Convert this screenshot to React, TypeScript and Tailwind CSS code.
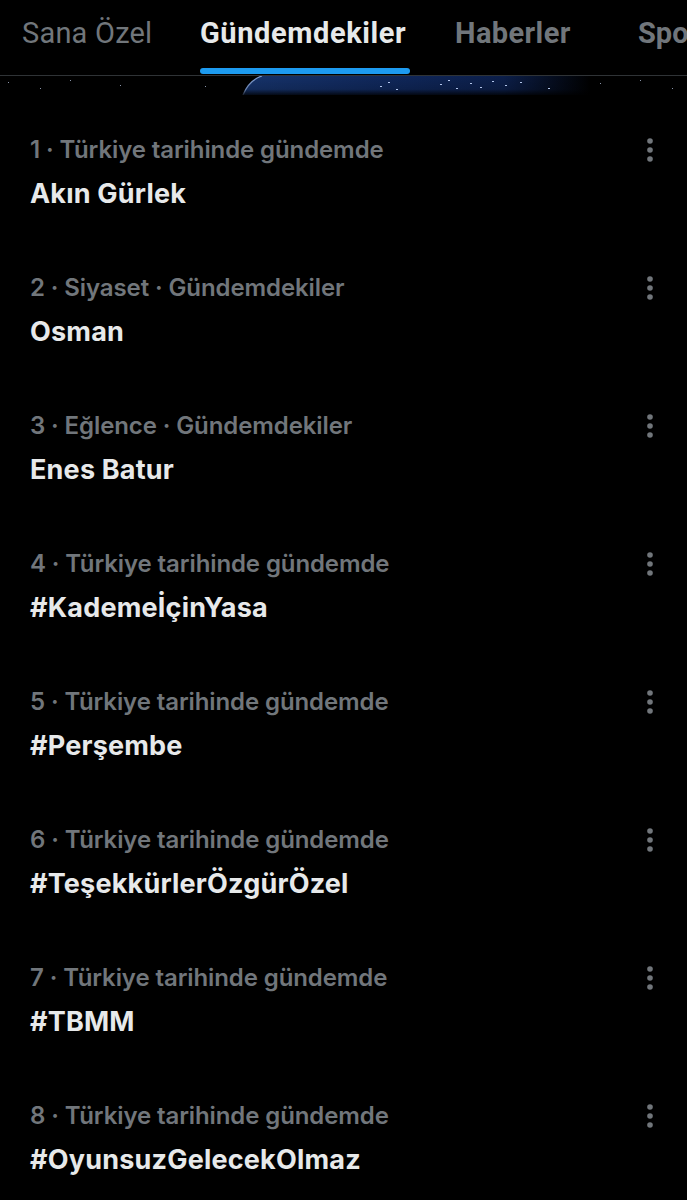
import React from "react";

const items = [
  { meta: "1 · Türkiye tarihinde gündemde", title: "Akın Gürlek" },
  { meta: "2 · Siyaset · Gündemdekiler", title: "Osman" },
  { meta: "3 · Eğlence · Gündemdekiler", title: "Enes Batur" },
  { meta: "4 · Türkiye tarihinde gündemde", title: "#KademeİçinYasa" },
  { meta: "5 · Türkiye tarihinde gündemde", title: "#Perşembe" },
  { meta: "6 · Türkiye tarihinde gündemde", title: "#TeşekkürlerÖzgürÖzel" },
  { meta: "7 · Türkiye tarihinde gündemde", title: "#TBMM" },
  { meta: "8 · Türkiye tarihinde gündemde", title: "#OyunsuzGelecekOlmaz" },
];

const stars: [number, number][] = [
  [8, 6], [40, 12], [70, 4], [120, 9], [205, 10], [600, 7], [640, 4], [672, 12],
];
const lights: [number, number][] = [
  [380, 10], [388, 6], [396, 13], [440, 8], [448, 4], [456, 12], [470, 7], [480, 11], [492, 5], [505, 9], [520, 6], [548, 12],
];

function Banner() {
  return (
    <svg width="687" height="19" viewBox="0 0 687 19" className="block">
      <defs>
        <linearGradient id="g" x1="0" x2="1" y1="0" y2="0">
          <stop offset="0" stopColor="#16336b" />
          <stop offset="0.4" stopColor="#10285c" />
          <stop offset="0.75" stopColor="#0c1f4a" />
          <stop offset="1" stopColor="#000" />
        </linearGradient>
        <linearGradient id="f" x1="0" x2="0" y1="0" y2="1">
          <stop offset="0" stopColor="#000" stopOpacity="0" />
          <stop offset="0.7" stopColor="#000" stopOpacity="0.15" />
          <stop offset="1" stopColor="#000" stopOpacity="0.8" />
        </linearGradient>
      </defs>
      <path d="M243 19 Q249 4 262 0 L590 0 L590 19 Z" fill="url(#g)" />
      <path d="M243 19 Q249 4 262 0" fill="none" stroke="#7f9cd0" strokeWidth="1.3" />
      <rect x="0" y="0" width="687" height="19" fill="url(#f)" />
      {stars.map(([x, y], i) => (
        <rect key={i} x={x} y={y} width="1" height="1" fill="#8a94a8" />
      ))}
      {lights.map(([x, y], i) => (
        <rect key={"l" + i} x={x} y={y} width="2" height="1" fill="#b3c6ec" />
      ))}
    </svg>
  );
}

function Dots() {
  return (
    <svg width="8" height="24" viewBox="0 0 8 24" className="block mt-[3px]">
      <circle cx="4" cy="3" r="2.8" fill="#71767b" />
      <circle cx="4" cy="12" r="2.8" fill="#71767b" />
      <circle cx="4" cy="21" r="2.8" fill="#71767b" />
    </svg>
  );
}

export default function App() {
  return (
    <div className="w-[687px] h-[1200px] bg-black overflow-hidden">
      <div
        className="h-[76px] border-b border-[#2f3336] flex items-start whitespace-nowrap overflow-hidden"
        style={{ fontFamily: "Roboto, 'Noto Sans', sans-serif" }}
      >
        <div className="w-[200px] shrink-0 pl-[22px] pt-[14px] text-[29px] text-[#71767b] leading-[38px] tracking-[0.2px]">Sana Özel</div>
        <div className="w-[210px] shrink-0 h-full flex flex-col justify-between pb-[1px]">
          <div className="pt-[14px] text-[29px] font-bold text-[#e7e9ea] leading-[38px] tracking-[0.6px]">Gündemdekiler</div>
          <div className="h-[6px] rounded-full bg-[#1d9bf0]" />
        </div>
        <div className="w-[228px] shrink-0 pl-[45px] pt-[14px] text-[29px] font-bold text-[#71767b] leading-[38px] tracking-[0.4px]">Haberler</div>
        <div className="shrink-0 pt-[14px] text-[29px] font-bold text-[#71767b] leading-[38px]">Spor</div>
      </div>
      <Banner />
      <div className="pt-[40px] flex flex-col" style={{ fontFamily: "Inter, 'Noto Sans', sans-serif" }}>
        {items.map((it, i) => (
          <div key={i} className="h-[138px] pl-[30px] pr-[33px] flex justify-between items-start">
            <div className="flex flex-col gap-[13px]">
              <div className="text-[24px] font-semibold text-[#71767b] leading-[30px] tracking-[-0.1px]">{it.meta}</div>
              <div className="text-[27px] font-bold text-[#e7e9ea] leading-[32px] tracking-[0.2px]">{it.title}</div>
            </div>
            <Dots />
          </div>
        ))}
      </div>
    </div>
  );
}
